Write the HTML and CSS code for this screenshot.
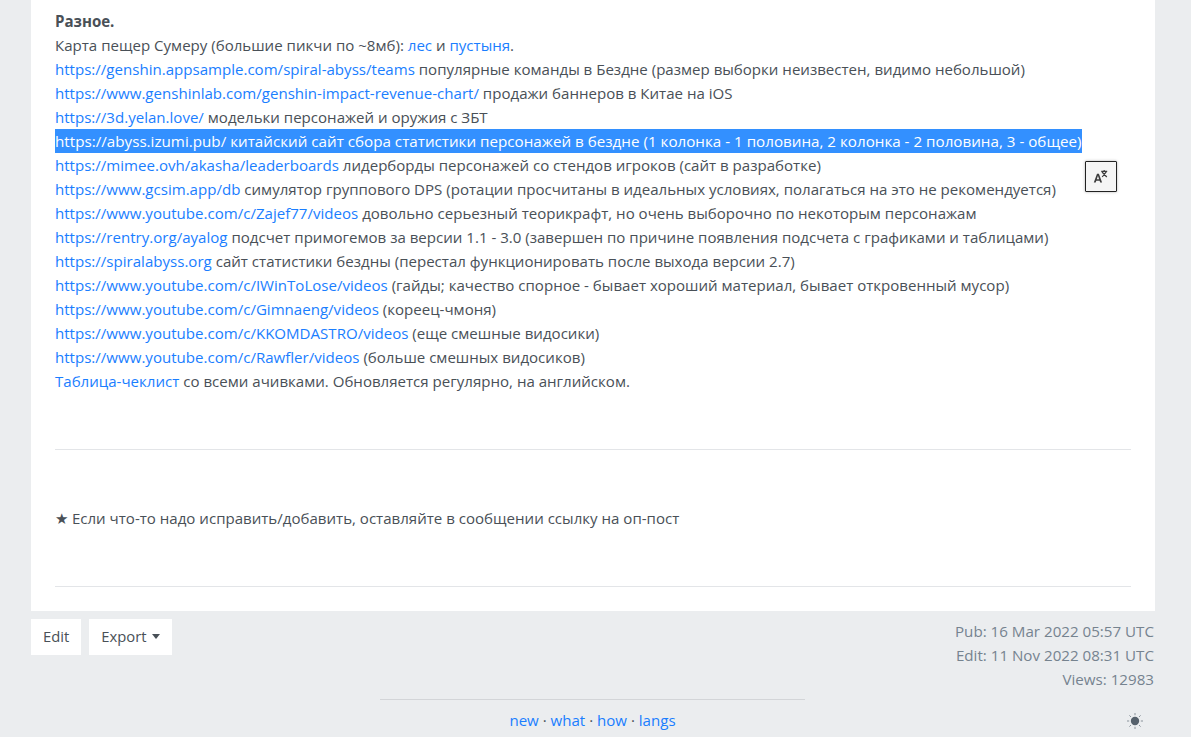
FILE: index.html
```html
<!DOCTYPE html>
<html lang="ru">
<head>
<meta charset="utf-8">
<title>Разное</title>
<link rel="stylesheet" href="styles.css">
</head>
<body>
<main class="page">
  <article class="card">
    <div class="lines">
      <p><strong>Разное.</strong></p>
      <p>Карта пещер Сумеру (большие пикчи по ~8мб): <a href="#">лес</a> и <a href="#">пустыня</a>.</p>
      <p><a href="#">https://genshin.appsample.com/spiral-abyss/teams</a> популярные команды в Бездне (размер выборки неизвестен, видимо небольшой)</p>
      <p><a href="#">https://www.genshinlab.com/genshin-impact-revenue-chart/</a> продажи баннеров в Китае на iOS</p>
      <p><a href="#">https://3d.yelan.love/</a> модельки персонажей и оружия с ЗБТ</p>
      <p><span class="selected">https://abyss.izumi.pub/ китайский сайт сбора статистики персонажей в бездне (1 колонка - 1 половина, 2 колонка - 2 половина, 3 - общее)</span></p>
      <p><a href="#">https://mimee.ovh/akasha/leaderboards</a> лидерборды персонажей со стендов игроков (сайт в разработке)</p>
      <p><a href="#">https://www.gcsim.app/db</a> симулятор группового DPS (ротации просчитаны в идеальных условиях, полагаться на это не рекомендуется)</p>
      <p><a href="#">https://www.youtube.com/c/Zajef77/videos</a> довольно серьезный теорикрафт, но очень выборочно по некоторым персонажам</p>
      <p><a href="#">https://rentry.org/ayalog</a> подсчет примогемов за версии 1.1 - 3.0 (завершен по причине появления подсчета с графиками и таблицами)</p>
      <p><a href="#">https://spiralabyss.org</a> сайт статистики бездны (перестал функционировать после выхода версии 2.7)</p>
      <p><a href="#">https://www.youtube.com/c/IWinToLose/videos</a> (гайды; качество спорное - бывает хороший материал, бывает откровенный мусор)</p>
      <p><a href="#">https://www.youtube.com/c/Gimnaeng/videos</a> (кореец-чмоня)</p>
      <p><a href="#">https://www.youtube.com/c/KKOMDASTRO/videos</a> (еще смешные видосики)</p>
      <p><a href="#">https://www.youtube.com/c/Rawfler/videos</a> (больше смешных видосиков)</p>
      <p><a href="#">Таблица-чеклист</a> со всеми ачивками. Обновляется регулярно, на английском.</p>
    </div>
    <hr class="rule rule-first">
    <p class="note">★ Если что-то надо исправить/добавить, оставляйте в сообщении ссылку на оп-пост</p>
    <hr class="rule rule-last">
  </article>

  <button class="translate" type="button" aria-label="Перевести">
    <svg width="16" height="16" viewBox="0 0 16 16" aria-hidden="true">
      <path class="tr-a" d="M.8 13.6 4 4.8h1.9l3.2 8.8H7.2l-.6-1.9H3.3l-.6 1.9Zm3-3.4h2.3L4.95 6.7Z"/>
      <path class="tr-x" d="M8.2 2.4h6M11.2 1v1.4M9.2 8 13.4 2.6M9 3l4.8 5"/>
    </svg>
  </button>

  <section class="actions">
    <div class="buttons">
      <a class="btn" href="#">Edit</a>
      <a class="btn" href="#">Export<span class="caret"></span></a>
    </div>
    <div class="meta">
      <div>Pub: 16 Mar 2022 05:57 UTC</div>
      <div>Edit: 11 Nov 2022 08:31 UTC</div>
      <div>Views: 12983</div>
    </div>
  </section>

  <footer class="footer">
    <nav class="footer-nav"><a href="#">new</a> · <a href="#">what</a> · <a href="#">how</a> · <a href="#">langs</a></nav>
    <button class="theme" type="button" aria-label="Тема">
      <svg width="16" height="16" viewBox="0 0 16 16" aria-hidden="true">
        <circle cx="8" cy="8" r="4.2"/>
        <path d="M8 0v2.2M8 13.8V16M0 8h2.2M13.8 8H16M2.4 2.4l1.6 1.6M12 12l1.6 1.6M2.4 13.6 4 12M12 4l1.6-1.6"/>
      </svg>
    </button>
  </footer>
</main>
</body>
</html>
```

FILE: styles.css
```css
* { box-sizing: border-box; }
html, body { margin: 0; height: 737px; overflow: hidden; }
body {
  background: #ebedef;
  color: #495057;
  font-family: "Open Sans", "Noto Sans", "Liberation Sans", sans-serif;
  font-size: 15.07px;
  line-height: 24px;
}
a { color: #1a7eff; text-decoration: none; }
p { margin: 0; }
strong { font-weight: 700; }

.page { position: relative; width: 1191px; height: 737px; padding: 0 36px 0 31px; }

.card { width: 1124px; height: 611px; background: #fff; padding: 9px 24px 0; }
.lines p { white-space: nowrap; }
.selected { background: #3390ff; color: #fff; display: inline-block; font-size: 15.2px; }

.rule { border: 0; border-top: 1px solid #e3e5e8; margin: 0; }
.rule-first { margin-top: 56px; }
.note { margin-top: 56px; }
.rule-last { margin-top: 56px; }

.translate {
  position: absolute; left: 1085px; top: 161px;
  width: 32px; height: 31px; padding: 0;
  display: flex; align-items: center; justify-content: center;
  background: #f5f5f5; border: 1px solid #222; border-radius: 1px;
  box-shadow: 0 0 3px rgba(0,0,0,.3);
}
.tr-a { fill: #3c3c3c; }
.tr-x { fill: none; stroke: #3c3c3c; stroke-width: 1.2; }

.actions { display: flex; justify-content: space-between; padding-top: 8px; width: 1124px; }
.buttons { display: flex; gap: 8px; align-items: flex-start; }
.btn {
  display: block; height: 36px; padding: 5px 12px;
  background: #fff; color: #495057; font-size: 14.8px;
}
.caret {
  display: inline-block; margin-left: 5px; vertical-align: 3px;
  border-top: 5px solid #495057;
  border-left: 4.5px solid transparent;
  border-right: 4.5px solid transparent;
}
.meta { text-align: right; color: #76838f; padding: 0 1px 0 0; font-size: 15.15px; }

.footer { position: relative; width: 425px; margin: 8px 0 0 349px; border-top: 1px solid #d3d5d8; padding-top: 8px; text-align: center; }
.footer-nav { color: #495057; }
.theme {
  position: absolute; left: 747px; top: 13px;
  width: 16px; height: 16px; padding: 0; background: none; border: 0; display: block;
}
.theme circle { fill: #56616c; }
.theme path { fill: none; stroke: #8a939b; stroke-width: 1; }
```
